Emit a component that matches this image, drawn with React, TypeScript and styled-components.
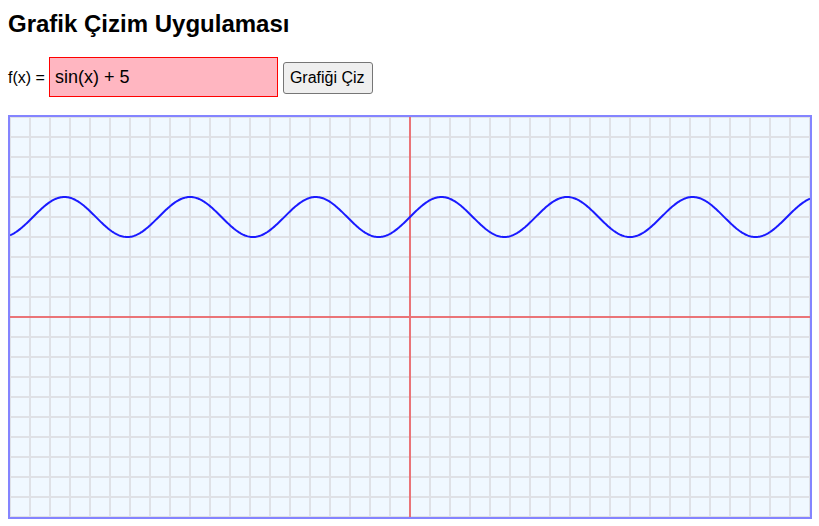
import React from "react";
import styled, { createGlobalStyle } from "styled-components";

const GlobalStyle = createGlobalStyle`
  html, body { margin: 0; padding: 0; background: #fff; }
  body {
    padding: 10px 8px;
    font-family: "Liberation Sans", Arial, sans-serif;
    color: #000;
  }
`;

const Title = styled.h2`
  margin: 0;
  font-size: 24px;
  line-height: 28px;
  font-weight: bold;
`;

const Row = styled.div`
  display: flex;
  align-items: baseline;
  margin-top: 19px;
`;

const Label = styled.label`
  font-size: 16px;
  margin-right: 4px;
`;

const FuncInput = styled.input`
  box-sizing: border-box;
  width: 229px;
  height: 40px;
  padding: 0 5px;
  font-family: "Liberation Sans", Arial, sans-serif;
  font-size: 18px;
  color: #000;
  border: 1px solid #ff0000;
  background: #ffb6c1;
  outline: none;
  margin: 0;
`;

const DrawButton = styled.button`
  box-sizing: border-box;
  height: 32px;
  margin: 0 0 0 5px;
  padding: 0 7px 0 6px;
  font-family: "Liberation Sans", Arial, sans-serif;
  font-size: 16px;
  color: #000;
  background: #efefef;
  border: 1px solid #767676;
  border-radius: 3px;
`;

const Board = styled.svg`
  display: block;
  margin-top: 18px;
  border: 2px solid #8484ff;
  background: #f0f8ff;
`;

const W = 800;
const H = 400;
const STEP = 20;
const SCALE = 20;

function buildPath(): string {
  const pts: string[] = [];
  for (let px = 0; px <= W; px++) {
    const x = (px - W / 2) / SCALE;
    const y = Math.sin(x) + 5;
    const py = H / 2 - y * SCALE;
    pts.push(`${px === 0 ? "M" : "L"}${px} ${py.toFixed(2)}`);
  }
  return pts.join(" ");
}

export default function App() {
  const vLines: number[] = [];
  for (let x = 0; x <= W; x += STEP) vLines.push(x);
  const hLines: number[] = [];
  for (let y = 0; y <= H; y += STEP) hLines.push(y);

  return (
    <>
      <GlobalStyle />
      <Title>Grafik Çizim Uygulaması</Title>
      <Row>
        <Label>f(x) =</Label>
        <FuncInput defaultValue="sin(x) + 5" />
        <DrawButton>Grafiği Çiz</DrawButton>
      </Row>
      <Board width={W} height={H} viewBox={`0 0 ${W} ${H}`}>
        <g stroke="#dfe1e6" strokeWidth={2}>
          {vLines.map((x) => (
            <line key={`v${x}`} x1={x} y1={0} x2={x} y2={H} />
          ))}
          {hLines.map((y) => (
            <line key={`h${y}`} x1={0} y1={y} x2={W} y2={y} />
          ))}
        </g>
        <g stroke="#ea7478" strokeWidth={2}>
          <line x1={W / 2} y1={0} x2={W / 2} y2={H} />
          <line x1={0} y1={H / 2} x2={W} y2={H / 2} />
        </g>
        <path d={buildPath()} fill="none" stroke="#1a1aff" strokeWidth={2} />
      </Board>
    </>
  );
}
